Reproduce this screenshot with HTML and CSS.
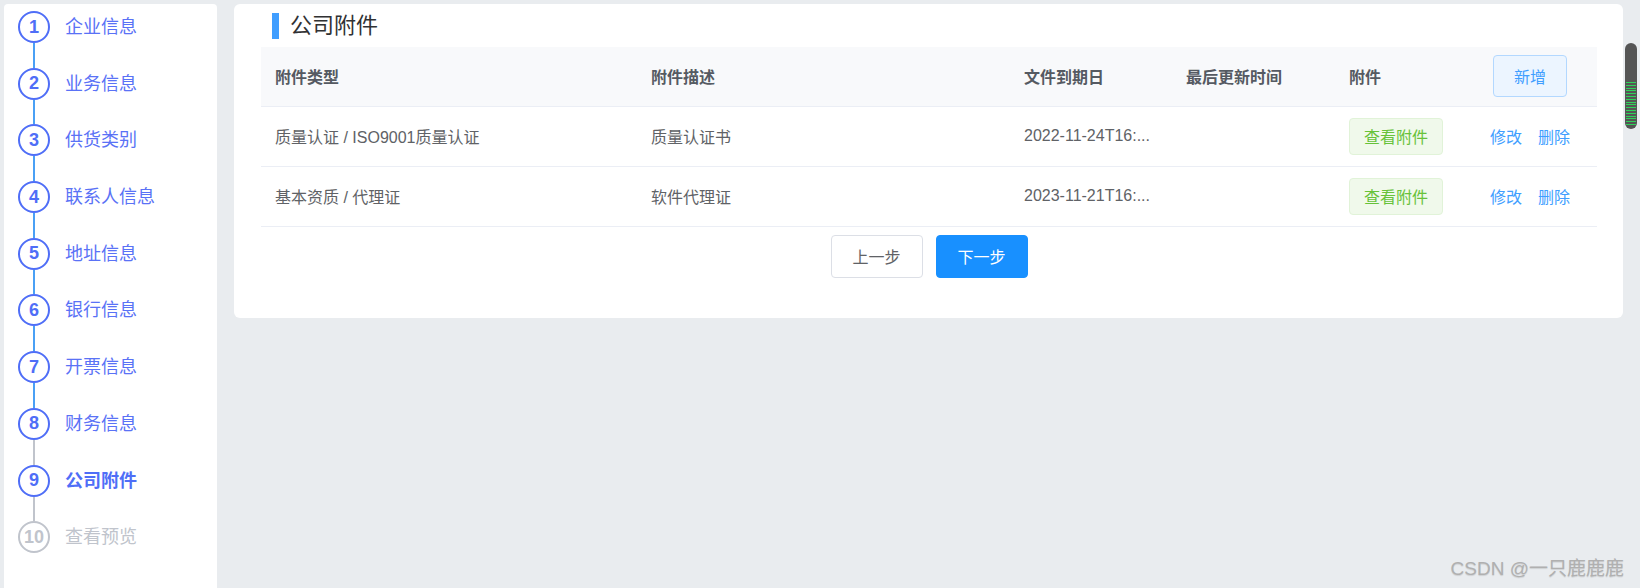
FILE: index.html
```html
<!DOCTYPE html>
<html lang="zh-CN">
  <head>
    <meta charset="UTF-8" />
    <meta name="viewport" content="width=device-width, initial-scale=1.0" />
    <title>公司附件</title>
    <link rel="stylesheet" href="styles.css">
  </head>
  <body>
    <aside class="steps">
      <div class="step done"><div class="rail"><span class="dot">1</span><i class="line"></i></div><div class="name">企业信息</div></div>
      <div class="step done"><div class="rail"><span class="dot">2</span><i class="line"></i></div><div class="name">业务信息</div></div>
      <div class="step done"><div class="rail"><span class="dot">3</span><i class="line"></i></div><div class="name">供货类别</div></div>
      <div class="step done"><div class="rail"><span class="dot">4</span><i class="line"></i></div><div class="name">联系人信息</div></div>
      <div class="step done"><div class="rail"><span class="dot">5</span><i class="line"></i></div><div class="name">地址信息</div></div>
      <div class="step done"><div class="rail"><span class="dot">6</span><i class="line"></i></div><div class="name">银行信息</div></div>
      <div class="step done"><div class="rail"><span class="dot">7</span><i class="line"></i></div><div class="name">开票信息</div></div>
      <div class="step"><div class="rail"><span class="dot">8</span><i class="line"></i></div><div class="name">财务信息</div></div>
      <div class="step current"><div class="rail"><span class="dot">9</span><i class="line"></i></div><div class="name">公司附件</div></div>
      <div class="step wait"><div class="rail"><span class="dot">10</span></div><div class="name">查看预览</div></div>
    </aside>

    <main class="card">
      <h2 class="card-title">公司附件</h2>
      <table class="files">
        <colgroup>
          <col style="width: 376px" />
          <col style="width: 373px" />
          <col style="width: 162px" />
          <col style="width: 163px" />
          <col style="width: 144px" />
          <col style="width: 118px" />
        </colgroup>
        <thead>
          <tr>
            <th>附件类型</th>
            <th>附件描述</th>
            <th>文件到期日</th>
            <th>最后更新时间</th>
            <th>附件</th>
            <th><button class="btn-add">新增</button></th>
          </tr>
        </thead>
        <tbody>
          <tr>
            <td>质量认证 / ISO9001质量认证</td>
            <td>质量认证书</td>
            <td>2022-11-24T16:...</td>
            <td></td>
            <td><button class="btn-view">查看附件</button></td>
            <td class="ops"><a>修改</a><a>删除</a></td>
          </tr>
          <tr>
            <td>基本资质 / 代理证</td>
            <td>软件代理证</td>
            <td>2023-11-21T16:...</td>
            <td></td>
            <td><button class="btn-view">查看附件</button></td>
            <td class="ops"><a>修改</a><a>删除</a></td>
          </tr>
        </tbody>
      </table>
      <div class="actions">
        <button class="btn-prev">上一步</button>
        <button class="btn-next">下一步</button>
      </div>
    </main>

    <div class="meter"><div class="meter-bars"></div></div>
    <div class="watermark">CSDN @一只鹿鹿鹿</div>
  </body>
</html>
```

FILE: styles.css
```css
* {
  margin: 0;
  padding: 0;
  box-sizing: border-box;
  font-family: "Liberation Sans", "Noto Sans CJK SC", sans-serif;
}

body {
  height: 100vh;
  overflow: hidden;
  background-color: #e9ecef;
  display: flex;
  align-items: flex-start;
  gap: 17px;
  padding: 4px 0 0 4px;
}

/* steps sidebar */
.steps {
  width: 213px;
  height: 584px;
  flex-shrink: 0;
  background-color: #fff;
  border-radius: 4px 4px 0 0;
  padding: 7px 0 0 14px;
}
.step {
  display: flex;
  height: 56.7px;
}
.rail {
  width: 32px;
  display: flex;
  flex-direction: column;
  align-items: center;
}
.dot {
  width: 32px;
  height: 32px;
  flex-shrink: 0;
  border: 2px solid #4f6ef7;
  border-radius: 50%;
  color: #4f6ef7;
  font-size: 18px;
  font-weight: bold;
  display: flex;
  align-items: center;
  justify-content: center;
}
.line {
  width: 2px;
  flex: 1;
  background-color: #c0c4cc;
}
.step.done .line {
  background-color: #4aa0f5;
}
.name {
  margin-left: 15px;
  height: 32px;
  line-height: 32px;
  font-size: 18px;
  color: #5a72f6;
}
.step.current .name {
  font-weight: bold;
  color: #4f6ef7;
}
.step.wait .dot {
  border-color: #c0c4cc;
  color: #c0c4cc;
}
.step.wait .name {
  color: #c0c4cc;
}

/* main card */
.card {
  width: 1389px;
  background-color: #fff;
  border-radius: 6px;
  padding: 0 26px 40px 27px;
}
.card-title {
  margin: 9px 0 8px 11px;
  height: 26px;
  line-height: 26px;
  border-left: 7px solid #409eff;
  padding-left: 11px;
  font-size: 22px;
  font-weight: normal;
  color: #303133;
}
.files {
  width: 100%;
  table-layout: fixed;
  border-collapse: collapse;
  font-size: 16px;
  color: #606266;
}
.files th,
.files td {
  text-align: left;
  padding: 0 0 0 14px;
  border-bottom: 1px solid #ebeef5;
  white-space: nowrap;
  overflow: hidden;
}
.files th {
  height: 59px;
  background-color: #f8f9fb;
  font-weight: bold;
  color: #555a62;
}
.files td {
  height: 60px;
}
.files td.ops {
  padding-left: 11px;
}
.ops a {
  color: #409eff;
  cursor: pointer;
  margin-right: 16px;
}

button {
  font-size: 16px;
  border-radius: 4px;
  cursor: pointer;
}
.btn-add {
  width: 74px;
  height: 42px;
  background-color: #ecf5ff;
  border: 1px solid #b3d8ff;
  color: #409eff;
}
.btn-view {
  width: 94px;
  height: 37px;
  background-color: #f0f9eb;
  border: 1px solid #e1f3d8;
  color: #67c23a;
}
.actions {
  display: flex;
  justify-content: center;
  gap: 13px;
  margin-top: 8px;
}
.actions button {
  width: 92px;
  height: 43px;
}
.btn-prev {
  background-color: #fff;
  border: 1px solid #dcdfe6;
  color: #606266;
}
.btn-next {
  background-color: #1890ff;
  border: 1px solid #1890ff;
  color: #fff;
}

/* overlays */
.meter {
  position: absolute;
  left: 1625px;
  top: 43px;
  width: 12px;
  height: 86px;
  background-color: #555;
  border-radius: 6px;
}
.meter-bars {
  position: absolute;
  left: 1px;
  right: 1px;
  top: 39px;
  height: 44px;
  background: repeating-linear-gradient(
    to bottom,
    #2fd15a 0px,
    #2fd15a 1px,
    transparent 1px,
    transparent 2.8px
  );
}
.watermark {
  position: absolute;
  right: 16px;
  bottom: 8px;
  font-size: 19px;
  color: #b0b0b0;
  text-shadow: 0 1px 1px rgba(0, 0, 0, 0.12);
}
```
